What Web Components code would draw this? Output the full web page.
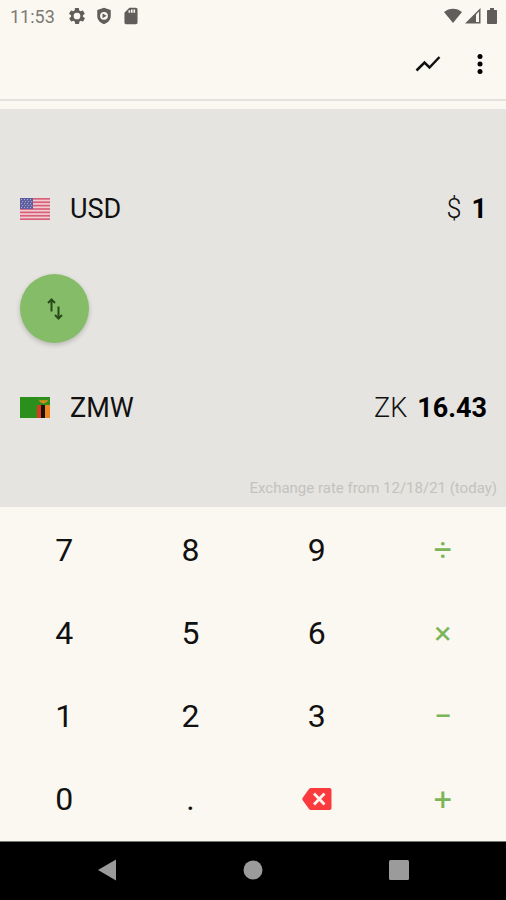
<!DOCTYPE html>
<html lang="en">
<head>
<meta charset="utf-8">
<meta name="viewport" content="width=device-width, initial-scale=1">
<title>Currency converter</title>
<style>
    body{
        margin: 0;
        background-color: #fbf8f1;
        font-family: Roboto, "Liberation Sans", sans-serif;
        color: #111;
    }
</style>
</head>
<body>
<converter-app></converter-app>

<script>
class StatusBar extends HTMLElement{
    constructor(){
        super();
        this.attachShadow({mode: 'open'}).innerHTML = `
            <style>
                :host{
                    display: flex;
                    align-items: center;
                    justify-content: space-between;
                    height: 32px;
                    padding: 0 6px 0 10px;
                    color: #5f5e5b;
                }
                div{
                    display: flex;
                    align-items: center;
                }
                .left{
                    gap: 10px;
                }
                .right{
                    gap: 3px;
                }
                time{
                    font-size: 18px;
                    color: #7b7a77;
                    margin-right: 4px;
                }
                svg{
                    display: block;
                    fill: currentColor;
                }
            </style>
            <div class="left">
                <time>11:53</time>
                <svg width="16" height="16" viewBox="2 2 20 20"><path d="M19.4 13c0-.3.1-.6.1-1s0-.7-.1-1l2.1-1.600c.2-.2.2-.4.1-.6l-2-3.500c-.1-.2-.4-.3-.6-.2l-2.500 1c-.5-.4-1.100-.7-1.700-1l-.4-2.600c0-.3-.2-.5-.5-.5h-4c-.2 0-.5.200-.5.400l-.4 2.700c-.6.200-1.100.6-1.700 1l-2.500-1c-.2-.1-.5 0-.6.200l-2 3.500c-.1.200-.1.500.1.600L4.600 11c0 .3-.1.600-.1 1s0 .7.100 1l-2.100 1.600c-.2.200-.2.400-.1.600l2 3.500c.1.200.4.300.6.200l2.500-1c.5.400 1.100.7 1.700 1l.4 2.600c0 .3.200.5.500.5h4c.2 0 .5-.2.500-.4l.4-2.700c.6-.2 1.100-.6 1.700-1l2.500 1c.2.100.5 0 .6-.2l2-3.500c.1-.2.100-.5-.1-.6zM12 16.200a4.200 4.200 0 1 1 0-8.400 4.200 4.200 0 0 1 0 8.400z" fill-rule="evenodd"/></svg>
                <svg width="18" height="18" viewBox="1 0 22 24"><path fill-rule="evenodd" d="M12 1 3 4v8c0 5 3.500 9 9 11 5.500-2 9-6 9-11V4zM12 6.500a5.200 5.200 0 1 1 0 10.400A5.200 5.200 0 0 1 12 6.500zM10 8.500v6.500l5.500-3.200z"/></svg>
                <svg width="16" height="18" viewBox="3 1 18 22"><path fill-rule="evenodd" d="M18 2h-8L4 8v12c0 1.100.9 2 2 2h12c1.100 0 2-.9 2-2V4c0-1.100-.9-2-2-2zM9 5h2v3H9zm3-1h2v4h-2zm3 0h2v4h-2z"/></svg>
            </div>
            <div class="right">
                <svg width="18" height="16" viewBox="0 0 18 16"><path d="M0 4C5-.5 13-.5 18 4L9 15z"/></svg>
                <svg width="16" height="16" viewBox="0 0 16 16"><path fill-rule="evenodd" d="M0 15.500 15.500 0v15.500zM11 6.500V14h3V3.500z"/></svg>
                <svg width="16" height="16" viewBox="0 0 16 16"><path d="M6 0h4v2h2c.6 0 1 .4 1 1v12c0 .6-.4 1-1 1H4c-.6 0-1-.4-1-1V3c0-.6.400-1 1-1h2z"/></svg>
            </div>
        `;
    }
}

class TopBar extends HTMLElement{
    constructor(){
        super();
        this.attachShadow({mode: 'open'}).innerHTML = `
            <style>
                :host{
                    display: flex;
                    justify-content: flex-end;
                    align-items: center;
                    gap: 12px;
                    height: 64px;
                    padding: 0 6px 3px 0;
                    border-bottom: 2px solid #e4e2dd;
                    margin-bottom: 8px;
                }
                button{
                    display: grid;
                    place-items: center;
                    width: 40px;
                    height: 40px;
                    padding: 0;
                    border: 0;
                    background: none;
                    color: #111;
                }
            </style>
            <button aria-label="Rate chart">
                <svg width="26" height="18" viewBox="0 0 26 18"><path d="M1.500 15.500 9.500 7.500l5 5L24.500 2" fill="none" stroke="currentColor" stroke-width="2.500"/></svg>
            </button>
            <button aria-label="More options">
                <svg width="6" height="20" viewBox="0 0 6 20"><circle cx="3" cy="2.500" r="2.500"/><circle cx="3" cy="10" r="2.500"/><circle cx="3" cy="17.500" r="2.500"/></svg>
            </button>
        `;
    }
}

// one currency line: flag slot, code, symbol and amount
class CurrencyRow extends HTMLElement{
    connectedCallback(){
        this.attachShadow({mode: 'open'}).innerHTML = `
            <style>
                :host{
                    display: flex;
                    align-items: center;
                    justify-content: space-between;
                    height: 100px;
                    padding: 0 19px 0 20px;
                    font-size: 27px;
                }
                button{
                    display: flex;
                    align-items: center;
                    gap: 20px;
                    padding: 0;
                    border: 0;
                    background: none;
                    font: inherit;
                    color: inherit;
                }
                p{
                    display: flex;
                    gap: 10px;
                    margin: 0;
                    font-weight: 300;
                }
                strong{
                    font-weight: 700;
                    color: #000;
                }
            </style>
            <button><slot></slot><span>${this.getAttribute('code')}</span></button>
            <p><span>${this.getAttribute('symbol')}</span><strong>${this.getAttribute('amount')}</strong></p>
        `;
    }
}

class FlagUs extends HTMLElement{
    constructor(){
        super();
        let stripes = '';
        for(let i = 0; i < 13; i += 2){
            stripes += `<rect y="${i * 22 / 13}" width="30" height="${22 / 13}" fill="#d8607a"/>`;
        }
        let stars = '';
        for(let y = 0; y < 5; y++){
            for(let x = 0; x < 4; x++){
                stars += `<circle cx="${1.5 + x * 3 + (y % 2) * 1.2}" cy="${1.6 + y * 2}" r=".6" fill="#b9b9dc"/>`;
            }
        }
        this.attachShadow({mode: 'open'}).innerHTML = `
            <style>
                :host, svg{
                    display: block;
                }
            </style>
            <svg width="30" height="22" viewBox="0 0 30 22">
                <rect width="30" height="22" fill="#f0cdd0"/>
                ${stripes}
                <rect width="13" height="11" fill="#5c5c9e"/>
                ${stars}
            </svg>
        `;
    }
}

class FlagZm extends HTMLElement{
    constructor(){
        super();
        this.attachShadow({mode: 'open'}).innerHTML = `
            <style>
                :host, svg{
                    display: block;
                }
            </style>
            <svg width="30" height="22" viewBox="0 0 30 22">
                <rect width="30" height="21" fill="#2b8f1c"/>
                <rect x="17" y="8" width="4" height="13" fill="#d93a20"/>
                <rect x="21" y="8" width="4" height="13" fill="#161208"/>
                <rect x="25" y="8" width="5" height="13" fill="#ef8522"/>
                <path d="M18.500 2.500 22 3.500l1.500-.8 1.500.8 3.500-1-2 3-1.700.3L23.500 7l-1.300-1.200-1.700-.3z" fill="#d98a1e"/>
            </svg>
        `;
    }
}

class SwapButton extends HTMLElement{
    constructor(){
        super();
        this.attachShadow({mode: 'open'}).innerHTML = `
            <style>
                :host{
                    display: flex;
                    align-items: center;
                    height: 99px;
                    padding: 0 20px;
                }
                button{
                    display: grid;
                    place-items: center;
                    width: 69px;
                    height: 69px;
                    padding: 0;
                    border: 0;
                    border-radius: 50%;
                    background-color: #85bc67;
                    box-shadow: 0 2px 5px rgba(0, 0, 0, .2);
                    color: #2a4a1c;
                }
            </style>
            <button aria-label="Swap currencies">
                <svg width="16" height="24" viewBox="0 0 16 24" fill="none" stroke="currentColor" stroke-width="2"><path d="M4.500 14.500V3M1 6l3.500-3.500L8 6M11.500 9.500v11M8 18l3.500 3.500L15 18"/></svg>
            </button>
        `;
    }
}

class ConverterPanel extends HTMLElement{
    constructor(){
        super();
        this.attachShadow({mode: 'open'}).innerHTML = `
            <style>
                :host{
                    display: block;
                    padding-top: 50px;
                    background-color: #e5e4e0;
                }
                footer{
                    padding: 20px 9px 9px;
                    font-size: 15px;
                    line-height: 20px;
                    text-align: right;
                    color: #c3c2bf;
                }
            </style>
            <slot></slot>
            <footer><slot name="note"></slot></footer>
        `;
    }
}

class KeyPad extends HTMLElement{
    constructor(){
        super();
        const keys = ['7', '8', '9', '÷', '4', '5', '6', '×', '1', '2', '3', '−', '0', '.', 'del', '+'];
        const backspace = '<svg width="30" height="24" viewBox="0 0 30 24"><path d="M9 1h18.500Q29.500 1 29.500 3v18q0 2-2 2H9Q7.800 23 7 22L.5 13Q0 12 .5 11L7 2Q7.800 1 9 1z" fill="#fb3a3e"/><path d="m12 6.500 10.500 11M22.500 6.500 12 17.500" stroke="#fff3ee" stroke-width="2.800"/></svg>';
        this.attachShadow({mode: 'open'}).innerHTML = `
            <style>
                :host{
                    display: grid;
                    grid-template-columns: repeat(4, 1fr);
                    grid-template-rows: repeat(4, 1fr);
                    padding: 1px 0 0 1px;
                }
                button{
                    display: grid;
                    place-items: center;
                    padding: 0;
                    border: 0;
                    background: none;
                    font: inherit;
                    font-size: 32px;
                    color: #111;
                }
                .op{
                    color: #7ab558;
                }
                svg{
                    display: block;
                }
            </style>
            ${keys.map(k => k == 'del'
                ? `<button aria-label="Delete">${backspace}</button>`
                : `<button class="${'÷×−+'.includes(k) ? 'op' : 'digit'}">${k}</button>`).join('')}
        `;
    }
}

class NavBar extends HTMLElement{
    constructor(){
        super();
        this.attachShadow({mode: 'open'}).innerHTML = `
            <style>
                :host{
                    display: flex;
                    justify-content: center;
                    align-items: center;
                    gap: 106px;
                    height: 56px;
                    padding-bottom: 2px;
                    border-top: 1px solid #777;
                    background-color: #000;
                }
                button{
                    display: grid;
                    place-items: center;
                    width: 40px;
                    height: 40px;
                    padding: 0;
                    border: 0;
                    background: none;
                }
                svg{
                    fill: #9b9b9b;
                }
            </style>
            <button aria-label="Back"><svg width="20" height="22" viewBox="0 0 20 22"><path d="M19 .5v21L1 11z"/></svg></button>
            <button aria-label="Home"><svg width="20" height="20" viewBox="0 0 20 20"><circle cx="10" cy="10" r="9.500"/></svg></button>
            <button aria-label="Recent apps"><svg width="20" height="20" viewBox="0 0 20 20"><rect width="20" height="20" rx="1.500"/></svg></button>
        `;
    }
}

class ConverterApp extends HTMLElement{
    constructor(){
        super();
        this.attachShadow({mode: 'open'}).innerHTML = `
            <style>
                :host{
                    display: flex;
                    flex-direction: column;
                    min-height: 100vh;
                }
                key-pad{
                    flex: 1;
                }
            </style>
            <status-bar></status-bar>
            <top-bar></top-bar>
            <converter-panel>
                <currency-row code="USD" symbol="$" amount="1"><flag-us></flag-us></currency-row>
                <swap-button></swap-button>
                <currency-row code="ZMW" symbol="ZK" amount="16.43"><flag-zm></flag-zm></currency-row>
                <span slot="note">Exchange rate from 12/18/21 (today)</span>
            </converter-panel>
            <key-pad></key-pad>
            <nav-bar></nav-bar>
        `;
    }
}

customElements.define("status-bar",StatusBar);
customElements.define("top-bar",TopBar);
customElements.define("currency-row",CurrencyRow);
customElements.define("flag-us",FlagUs);
customElements.define("flag-zm",FlagZm);
customElements.define("swap-button",SwapButton);
customElements.define("converter-panel",ConverterPanel);
customElements.define("key-pad",KeyPad);
customElements.define("nav-bar",NavBar);
customElements.define("converter-app",ConverterApp);
</script>
</body>
</html>
